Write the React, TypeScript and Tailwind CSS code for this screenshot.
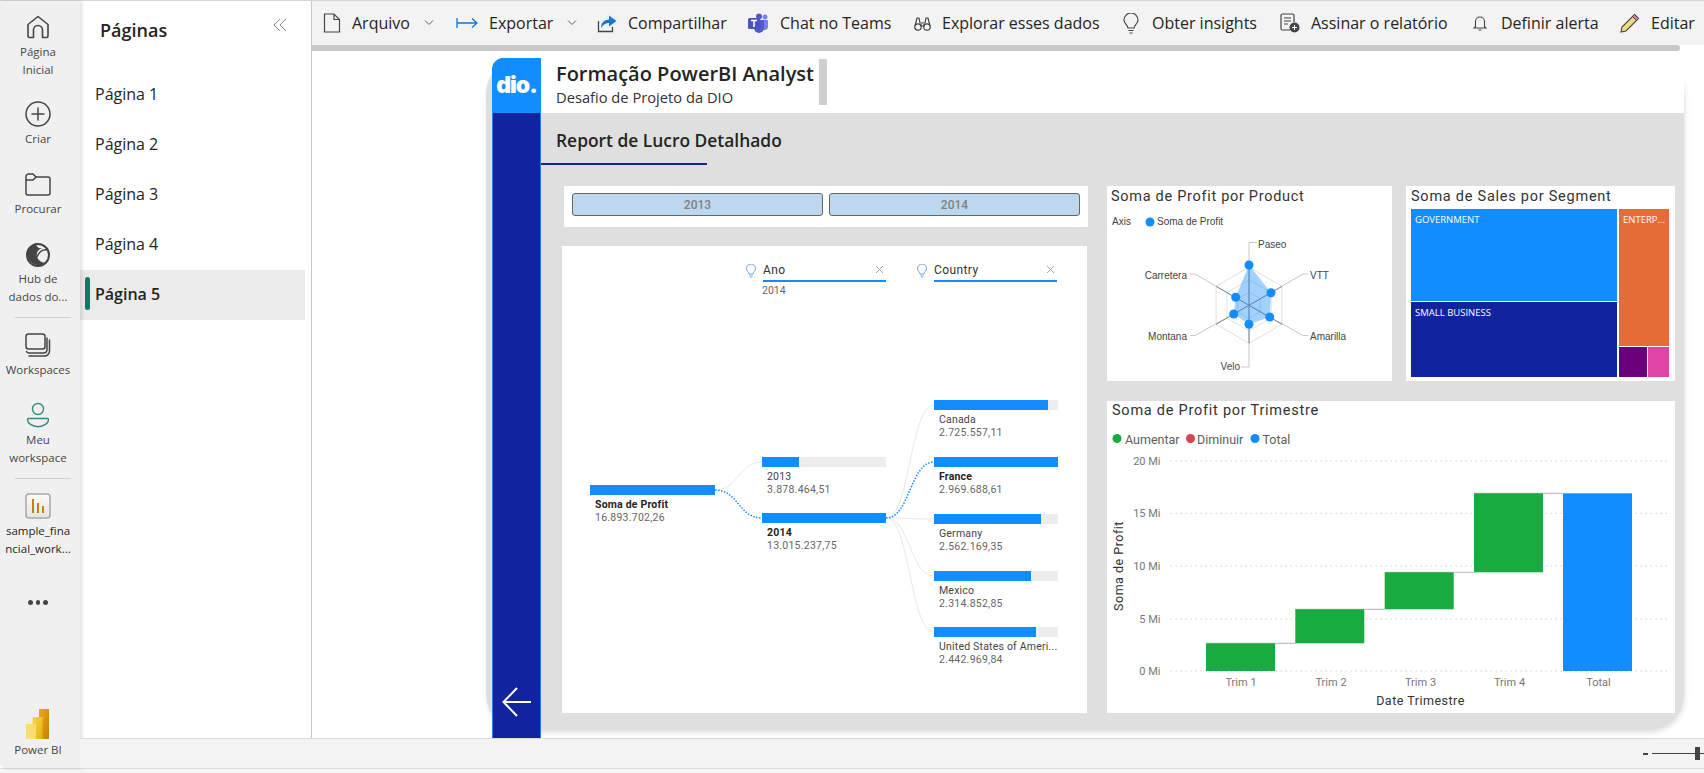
import React from "react";

const sans = "[font-family:'Open_Sans',sans-serif]";
const din = "[font-family:'Roboto',sans-serif]";

const S = { fill: "none", stroke: "#444", strokeWidth: 1.5, strokeLinejoin: "round" as const, strokeLinecap: "round" as const };

function HomeIcon() {
  return (
    <svg width="26" height="26" viewBox="0 0 26 26">
      <path d="M3 22V10.500L13 2.500l10 8V22a1.500 1.500 0 0 1-1.500 1.500H17.500V16a4.500 4.500 0 0 0-9 0v7.500H4.500A1.500 1.500 0 0 1 3 22z" {...S} strokeWidth={1.6} />
    </svg>
  );
}
function PlusIcon() {
  return (
    <svg width="26" height="26" viewBox="0 0 26 26">
      <circle cx="13" cy="13" r="12" {...S} />
      <path d="M13 7v12M7 13h12" {...S} />
    </svg>
  );
}
function FolderIcon() {
  return (
    <svg width="26" height="26" viewBox="0 0 26 26">
      <path d="M1 5.500A2.500 2.500 0 0 1 3.500 3H8l3 3h12a2 2 0 0 1 2 2v14a2 2 0 0 1-2 2H3a2 2 0 0 1-2-2z" {...S} />
      <path d="M1 9h7l3-3" {...S} />
    </svg>
  );
}
function HubIcon() {
  return (
    <svg width="26" height="26" viewBox="0 0 26 26">
      <circle cx="13" cy="14" r="11" fill="#f0f0f0" stroke="#444" strokeWidth="2" />
      <path d="M2.500 13C3 7 8 3 11 2c0 4 3 6 7 5-5 1-7 5-6 9 1 3 5 6 9 6-3 2-6 3-9 2-6-1-10-6-9.500-11z" fill="#444" />
      <path d="M12 16c2-5 6-8 11-7" fill="none" stroke="#444" strokeWidth="1.500" />
    </svg>
  );
}
function WorkspacesIcon() {
  return (
    <svg width="26" height="26" viewBox="0 0 26 26">
      <rect x="1" y="2" width="19" height="15" rx="2.500" {...S} />
      <path d="M1.500 19.500c.5 1 1.500 1.500 2.500 1.500h14.500c2 0 3.500-1.500 3.500-3.500V6" {...S} />
      <path d="M4 24h15.500c2.500 0 5-2 5-5V8" {...S} />
    </svg>
  );
}
function PersonIcon() {
  return (
    <svg width="26" height="26" viewBox="0 0 26 26">
      <circle cx="13" cy="7" r="5.500" fill="none" stroke="#2f8f7f" strokeWidth="1.400" />
      <path d="M3.500 16.500h19c.8 0 1 .6 1 1.200 0 3.300-4.500 7-10.500 7S2.500 21 2.500 17.700c0-.6.2-1.200 1-1.200z" fill="none" stroke="#2f8f7f" strokeWidth="1.400" />
    </svg>
  );
}
function ReportIcon() {
  return (
    <svg width="26" height="26" viewBox="0 0 26 26">
      <defs>
        <linearGradient id="rb" x1="0" x2="0" y1="0" y2="1"><stop offset="0" stopColor="#fbfbfb" /><stop offset="1" stopColor="#e4e4e4" /></linearGradient>
      </defs>
      <rect x="1" y="1" width="24" height="24" rx="3" fill="url(#rb)" stroke="#a8a8a8" strokeWidth="1.500" />
      <rect x="7" y="6" width="2" height="14" fill="#c57f13" />
      <rect x="12" y="10" width="2" height="10" fill="#c57f13" />
      <rect x="17" y="13" width="2" height="7" fill="#c57f13" />
    </svg>
  );
}
function PbiLogo() {
  return (
    <svg width="24" height="30" viewBox="0 0 24 30">
      <defs>
        <linearGradient id="pa" x1="0" x2="1" y1="0" y2="1"><stop offset="0" stopColor="#e6ad10" /><stop offset="1" stopColor="#c87d0e" /></linearGradient>
        <linearGradient id="pb" x1="0" x2="1" y1="0" y2="1"><stop offset="0" stopColor="#f6d751" /><stop offset="1" stopColor="#e6ad10" /></linearGradient>
      </defs>
      <rect x="13" y="0" width="10" height="30" fill="url(#pa)" />
      <rect x="6.500" y="8" width="10" height="22" fill="url(#pb)" />
      <rect x="0" y="15" width="10" height="15" fill="#f8de6f" />
    </svg>
  );
}

function RailItem({ icon, lines, mt, dark }: { icon: React.ReactNode; lines: string[]; mt: string; dark?: boolean }) {
  return (
    <div className={`flex flex-col items-center ${mt}`}>
      <div className="h-[26px] flex items-center justify-center">{icon}</div>
      <div className={`mt-[3px] text-center text-[11.5px] leading-[18px] whitespace-nowrap ${dark ? "text-[#252423]" : "text-[#484644]"}`}>
        {lines.map((l) => <div key={l}>{l}</div>)}
      </div>
    </div>
  );
}

function Rail() {
  return (
    <div className="w-[80px] shrink-0 h-full pr-[4px] bg-[#f0f0f0] rounded-bl-[6px] shadow-[2px_0_4px_rgba(0,0,0,0.12)] z-20 flex flex-col relative">
      <RailItem mt="mt-[13px]" icon={<HomeIcon />} lines={["Página", "Inicial"]} />
      <RailItem mt="mt-[22px]" icon={<PlusIcon />} lines={["Criar"]} />
      <RailItem mt="mt-[23px]" icon={<FolderIcon />} lines={["Procurar"]} />
      <RailItem mt="mt-[23px]" icon={<HubIcon />} lines={["Hub de", "dados do..."]} />
      <div className="mt-[11px] ml-[15px] mr-[5px] h-px bg-[#d0d0d0]" />
      <RailItem mt="mt-[14px]" icon={<WorkspacesIcon />} lines={["Workspaces"]} />
      <RailItem mt="mt-[23px]" icon={<PersonIcon />} lines={["Meu", "workspace"]} />
      <div className="mt-[11px] ml-[15px] mr-[5px] h-px bg-[#d0d0d0]" />
      <RailItem mt="mt-[14px]" icon={<ReportIcon />} lines={["sample_fina", "ncial_work..."]} dark />
      <div className="mt-[42px] flex justify-center gap-[3px]">
        <span className="w-[4.5px] h-[4.5px] rounded-full bg-[#484644]" />
        <span className="w-[4.5px] h-[4.5px] rounded-full bg-[#484644]" />
        <span className="w-[4.5px] h-[4.5px] rounded-full bg-[#484644]" />
      </div>
      <div className="mt-auto mb-[9px] flex flex-col items-center">
        <PbiLogo />
        <div className="mt-[2px] text-[11.5px] leading-[18px] text-[#484644]">Power BI</div>
      </div>
    </div>
  );
}

function PagesPanel() {
  const pages = ["Página 1", "Página 2", "Página 3", "Página 4", "Página 5"];
  return (
    <div className="w-[232px] shrink-0 bg-white border-r border-[#c8c8c8] flex flex-col">
      <div className="h-[69px] flex items-start justify-between pl-[20px] pr-[24px] pt-[15px]">
        <span className="text-[18px] leading-[28px] font-semibold text-[#252423]">Páginas</span>
        <svg className="mt-[2px]" width="14" height="14" viewBox="0 0 14 14" fill="none" stroke="#7f8c99" strokeWidth="1">
          <path d="M7 1L1 7l6 6M13 1L7 7l6 6" />
        </svg>
      </div>
      {pages.map((p, i) => (
        <div key={p} className={`h-[50px] w-[225px] flex items-center pl-[15px] pb-[3px] text-[16px] text-[#252423] relative ${i === 4 ? "bg-[#ebebeb] font-semibold" : ""}`}>
          {i === 4 && <span className="absolute left-[5px] top-[7px] w-[5px] h-[33px] rounded-[3px] bg-[#117865]" />}
          {p}
        </div>
      ))}
    </div>
  );
}

function Chevron() {
  return (
    <svg className="ml-[14px]" width="10" height="6" viewBox="0 0 10 6" fill="none" stroke="#605e5c" strokeWidth="1"><path d="M1 .5l4 4 4-4" /></svg>
  );
}

function Tool({ w, icon, label, chevron }: { w: string; icon: React.ReactNode; label: string; chevron?: boolean }) {
  return (
    <div className={`${w} shrink-0 flex items-center h-full`}>
      {icon}
      <span className="ml-[11px] text-[16px] text-[#252423] whitespace-nowrap">{label}</span>
      {chevron && <Chevron />}
    </div>
  );
}

function Toolbar() {
  return (
    <div className="h-[44px] bg-[#f3f3f3] flex items-center pl-[11px] overflow-hidden">
      <Tool w="w-[133px]" label="Arquivo" chevron icon={
        <svg width="18" height="20" viewBox="0 0 18 20" fill="none" stroke="#444" strokeWidth="1.200"><path d="M1.500 1h9.500l5.500 5.500V19h-15z" /><path d="M11 1v5.500h5.500" /></svg>} />
      <Tool w="w-[141px]" label="Exportar" chevron icon={
        <svg width="22" height="12" viewBox="0 0 22 12" fill="none" stroke="#0f78d4" strokeWidth="1.300"><path d="M1 1v10M1 6h20M16 1.500L21 6l-5 4.500" /></svg>} />
      <Tool w="w-[151px]" label="Compartilhar" icon={
        <svg width="20" height="20" viewBox="0 0 20 20"><path d="M1.500 8v10.500h14V14" fill="none" stroke="#444" strokeWidth="1.300" /><path d="M4 15c0-5 3-8.500 8-8.500V2.500L19.500 8 12 13.500V10c-3 0-6 1.500-8 5z" fill="#1c78c8" /></svg>} />
      <Tool w="w-[166px]" label="Chat no Teams" icon={
        <svg width="21" height="20" viewBox="0 0 21 20"><circle cx="17" cy="4" r="2.500" fill="#7b83eb" /><circle cx="11" cy="3.500" r="3" fill="#5059c9" /><path d="M13 7h7v6.500a3.500 3.500 0 0 1-7 0z" fill="#7b83eb" /><path d="M6 7h10v8a5 5 0 0 1-10 0z" fill="#5059c9" /><rect x="0" y="5" width="12" height="11" rx="1.500" fill="#4b53bc" /><path d="M3 7.500h6M6 7.500V14" stroke="#fff" strokeWidth="1.600" /></svg>} />
      <Tool w="w-[209px]" label="Explorar esses dados" icon={
        <svg width="17" height="17" viewBox="0 0 17 17" fill="none" stroke="#444" strokeWidth="1.200"><circle cx="4" cy="12" r="3.200" /><circle cx="13" cy="12" r="3.200" /><path d="M1 11l2-8h2l1 5h5l1-5h2l2 8M7 9v2h3V9" /></svg>} />
      <Tool w="w-[157px]" label="Obter insights" icon={
        <svg className="mr-[2px]" width="16" height="21" viewBox="0 0 16 21" fill="none" stroke="#444" strokeWidth="1.200"><path d="M5 15c0-3-4-4-4-8a7 7 0 0 1 14 0c0 4-4 5-4 8z" /><path d="M5.500 17.500h5M6.500 20h3" /></svg>} />
      <Tool w="w-[193px]" label="Assinar o relatório" icon={
        <svg width="20" height="20" viewBox="0 0 20 20"><path d="M10 17H2.500A1.500 1.500 0 0 1 1 15.500v-13A1.500 1.500 0 0 1 2.500 1h10A1.500 1.500 0 0 1 14 2.500V9" fill="none" stroke="#444" strokeWidth="1.200" /><path d="M4 5h7M4 8h7M4 11h4" stroke="#444" strokeWidth="1.200" /><circle cx="14.500" cy="14.500" r="5" fill="#444" /><path d="M14.500 12v5M12 14.500h5" stroke="#fff" strokeWidth="1" /></svg>} />
      <Tool w="w-[147px]" label="Definir alerta" icon={
        <svg className="mr-[3px]" width="14" height="16" viewBox="0 0 14 16" fill="none" stroke="#444" strokeWidth="1.100"><path d="M2.500 11.500V6.500a4.500 4.500 0 0 1 9 0v5l1.500 1.500H1zM5.500 15h3" /></svg>} />
      <Tool w="w-[84px]" label="Editar" icon={
        <svg width="20" height="20" viewBox="0 0 20 20"><path d="M14.500 1.500l4 4L6 18l-5 1 1-5z" fill="#f3d980" stroke="#444" strokeWidth="1.100" /><path d="M14.500 1.500l4 4-2 2-4-4z" fill="#d17fb0" stroke="#444" strokeWidth="1" /></svg>} />
    </div>
  );
}

function Node({ x, y, w, fill, label, value, bold }: { x: number; y: number; w: number; fill: number; label: string; value: string; bold?: boolean }) {
  return (
    <div className="absolute" style={{ left: x - 562, top: y - 246, width: w }}>
      <div className="h-[10px] bg-[#ededed]">
        <div className="h-full bg-[#118dff]" style={{ width: fill }} />
      </div>
      <div className={`pl-[5px] mt-[3px] text-[10.5px] leading-[13px] whitespace-nowrap overflow-hidden ${din} ${bold ? "font-bold text-[#252423]" : "text-[#444]"} tracking-[0.2px]`}>{label}</div>
      <div className={`pl-[5px] text-[10.5px] leading-[14px] text-[#666] ${din} tracking-[0.25px]`}>{value}</div>
    </div>
  );
}

function HeaderFilter({ x, label }: { x: number; label: string }) {
  return (
    <div className="absolute flex items-end" style={{ left: x - 562, top: 17, width: 140 }}>
      <svg className="mb-[4px]" width="10" height="14" viewBox="0 0 10 14" fill="none" stroke="#6f9cf0" strokeWidth="1"><path d="M3 10c0-2-2.500-3-2.500-5.500a4.500 4.500 0 0 1 9 0C9.500 7 7 8 7 10zM3.500 12h3M4.500 13.500h1" /></svg>
      <div className="ml-[7px] flex-1 border-b-2 border-[#118dff] h-[19px] pb-[4px] flex items-center justify-between pr-[2px]">
        <span className={`text-[12px] text-[#333] tracking-[0.4px] ${din}`}>{label}</span>
        <svg width="9" height="9" viewBox="0 0 9 9" stroke="#a6a6a6" strokeWidth="1"><path d="M1 1l7 7M8 1L1 8" /></svg>
      </div>
    </div>
  );
}

function TreeCard() {
  const curve = (x1: number, y1: number, x2: number, y2: number) => {
    const m = (x1 + x2) / 2;
    return `M${x1} ${y1}C${m} ${y1} ${m} ${y2} ${x2} ${y2}`;
  };
  return (
    <div className="relative h-[467px] w-[525px] bg-white">
      <svg className="absolute left-0 top-0" width="525" height="467" viewBox="562 246 525 467" fill="none">
        <path d={curve(715, 490, 762, 462)} stroke="#e8e8e8" />
        {[405, 519, 576, 632].map((y) => <path key={y} d={curve(886, 518, 934, y)} stroke="#e8e8e8" />)}
        <path d={curve(715, 490, 762, 518)} stroke="#118dff" strokeWidth="1.500" strokeDasharray="1.500 1.500" />
        <path d={curve(886, 518, 934, 462)} stroke="#118dff" strokeWidth="1.500" strokeDasharray="1.500 1.500" />
      </svg>
      <HeaderFilter x={746} label="Ano" />
      <div className={`absolute left-[200px] top-[38px] text-[10.5px] leading-[14px] text-[#666] ${din}`}>2014</div>
      <HeaderFilter x={917} label="Country" />
      <Node x={590} y={485} w={125} fill={125} label="Soma de Profit" value="16.893.702,26" bold />
      <Node x={762} y={457} w={124} fill={37} label="2013" value="3.878.464,51" />
      <Node x={762} y={513} w={124} fill={124} label="2014" value="13.015.237,75" bold />
      <Node x={934} y={400} w={124} fill={114} label="Canada" value="2.725.557,11" />
      <Node x={934} y={457} w={124} fill={124} label="France" value="2.969.688,61" bold />
      <Node x={934} y={514} w={124} fill={107} label="Germany" value="2.562.169,35" />
      <Node x={934} y={571} w={124} fill={97} label="Mexico" value="2.314.852,85" />
      <Node x={934} y={627} w={124} fill={102} label="United States of Ameri..." value="2.442.969,84" />
    </div>
  );
}

function RadarCard() {
  const cx = 1249, cy = 305.3;
  const dirs = [[0, -1], [0.866, -0.5], [0.866, 0.5], [0, 1], [-0.866, 0.5], [-0.866, -0.5]];
  const hex = (r: number) => dirs.map(([a, b]) => `${cx + a * r},${cy + b * r}`).join(" ");
  const pts = [[1249, 265], [1271, 292.7], [1269.7, 317], [1249, 324.3], [1233.7, 314], [1235.7, 297.3]];
  return (
    <div className="w-[285px] h-[195px] bg-white">
      <div className={`h-[22px] pl-[4px] text-[14.5px] leading-[21px] text-[#333] tracking-[0.7px] whitespace-nowrap ${din}`}>Soma de Profit por Product</div>
      <svg width="285" height="173" viewBox="1107 208 285 173" fontFamily="'Liberation Sans',sans-serif" fontSize="10" fill="#444">
        <text x="1112" y="225">Axis</text>
        <circle cx="1150" cy="222" r="4.500" fill="#118dff" />
        <text x="1157" y="225">Soma de Profit</text>
        {[38, 25.5, 13].map((r) => <polygon key={r} points={hex(r)} fill="none" stroke="#e0e0e0" />)}
        <path d="M1249 305.300V242.500H1257M1249 305.300L1303 274H1308M1249 305.300L1303 335.500H1308M1249 305.300V367H1241M1249 305.300L1195 335.500H1190M1249 305.300L1195 274H1190" fill="none" stroke="#c8c8c8" />
        <path d="M1249 267.300V343.300M1216 286.300L1282 324.300M1216 324.300L1282 286.300" stroke="#8a8a8a" />
        <polygon points={pts.map((p) => p.join(",")).join(" ")} fill="#118dff" fillOpacity="0.4" />
        {pts.map(([x, y]) => <circle key={x} cx={x} cy={y} r="4.500" fill="#118dff" />)}
        <text x="1258" y="248">Paseo</text>
        <text x="1310" y="279">VTT</text>
        <text x="1310" y="340">Amarilla</text>
        <text x="1240" y="370" textAnchor="end">Velo</text>
        <text x="1187" y="340" textAnchor="end">Montana</text>
        <text x="1187" y="279" textAnchor="end">Carretera</text>
      </svg>
    </div>
  );
}

function TreemapCard() {
  return (
    <div className="w-[269px] h-[195px] bg-white flex flex-col">
      <div className={`h-[23px] pl-[5px] text-[14.5px] leading-[21px] text-[#333] tracking-[0.75px] whitespace-nowrap ${din}`}>Soma de Sales por Segment</div>
      <div className={`ml-[5px] w-[258px] h-[168px] flex gap-[2px] text-[9.5px] leading-[13px] text-white ${sans}`}>
        <div className="w-[206px] flex flex-col gap-[1px]">
          <div className="h-[92px] bg-[#118dff] pl-[4px] pt-[4px]">GOVERNMENT</div>
          <div className="flex-1 bg-[#12239e] pl-[4px] pt-[4px]">SMALL BUSINESS</div>
        </div>
        <div className="flex-1 flex flex-col gap-[1px]">
          <div className="h-[137px] bg-[#e66c37] pl-[4px] pt-[4px]">ENTERP...</div>
          <div className="flex-1 flex gap-[1px]">
            <div className="w-[28px] bg-[#6b007b]" />
            <div className="flex-1 bg-[#e044a7]" />
          </div>
        </div>
      </div>
    </div>
  );
}

function WaterfallCard() {
  const bars = [
    { x: 1206, top: 643.3, bottom: 671, c: "#1aab40", n: "Trim 1", cx: 1241 },
    { x: 1295.3, top: 609.3, bottom: 643.3, c: "#1aab40", n: "Trim 2", cx: 1331 },
    { x: 1384.7, top: 572.3, bottom: 609.3, c: "#1aab40", n: "Trim 3", cx: 1420.5 },
    { x: 1474, top: 493.3, bottom: 572.3, c: "#1aab40", n: "Trim 4", cx: 1509.5 },
    { x: 1563, top: 493.3, bottom: 671, c: "#118dff", n: "Total", cx: 1598.5 },
  ];
  const grid: [string, number][] = [["20 Mi", 461], ["15 Mi", 513.3], ["10 Mi", 566], ["5 Mi", 619], ["0 Mi", 671]];
  return (
    <div className="w-[568px] h-[312px] bg-white">
      <div className={`h-[24px] pl-[5px] text-[14.5px] leading-[20px] text-[#333] tracking-[0.75px] whitespace-nowrap ${din}`}>Soma de Profit por Trimestre</div>
      <svg width="568" height="288" viewBox="1107 425 568 288" fontFamily="'Roboto',sans-serif">
        <circle cx="1117" cy="438.500" r="4.500" fill="#1aab40" />
        <text x="1125" y="443.500" fontSize="12.500" fill="#605e5c">Aumentar</text>
        <circle cx="1190.500" cy="438.500" r="4.500" fill="#d64554" />
        <text x="1197" y="443.500" fontSize="12.500" fill="#605e5c">Diminuir</text>
        <circle cx="1255" cy="438.500" r="4.500" fill="#118dff" />
        <text x="1262.500" y="443.500" fontSize="12.500" fill="#605e5c">Total</text>
        {grid.map(([t, y]) => (
          <g key={t}>
            <line x1="1170.500" x2="1667.500" y1={y} y2={y} stroke="#d2d2d2" strokeDasharray="1.500 3.500" />
            <text x="1160.500" y={y + 4} textAnchor="end" fontSize="11" fill="#777">{t}</text>
          </g>
        ))}
        {bars.slice(0, 4).map((b, i) => (
          <line key={b.n} x1={b.x} x2={bars[i + 1].x} y1={b.top} y2={b.top} stroke="#b3b3b3" strokeWidth="1" />
        ))}
        {bars.map((b) => (
          <g key={b.n}>
            <rect x={b.x} y={b.top} width="69" height={b.bottom - b.top} fill={b.c} />
            <text x={b.cx} y="686" textAnchor="middle" fontSize="11" fill="#777">{b.n}</text>
          </g>
        ))}
        <text x="1420.500" y="705" textAnchor="middle" fontSize="12.500" fill="#333" letterSpacing="0.500">Date Trimestre</text>
        <text transform="translate(1123 566) rotate(-90)" textAnchor="middle" fontSize="12.500" fill="#333" letterSpacing="0.500">Soma de Profit</text>
      </svg>
    </div>
  );
}

function Slicer() {
  const btn = `flex-1 h-[23px] bg-[#bdd7ee] border border-[#666] rounded-[3px] flex items-center justify-center text-[12px] font-medium text-[#808080] ${din}`;
  return (
    <div className="ml-[2px] h-[41px] w-[524px] bg-white flex items-start gap-[6px] px-[8px] pt-[7px]">
      <div className={btn}>2013</div>
      <div className={btn}>2014</div>
    </div>
  );
}

function Canvas() {
  return (
    <div className="ml-[174px] mt-[7px] w-[1198px] h-[672px] rounded-[36px] bg-[#dfdfdf] shadow-[1px_3px_5px_rgba(0,0,0,0.12)] flex overflow-visible">
      <div className="ml-[6px] w-[49px] h-[680px] shrink-0 bg-[#12239e] border-x border-[#2f7fd8] rounded-tl-[12px] flex flex-col z-10">
        <div className="h-[55px] -mx-px bg-[#118dff] rounded-tl-[12px] flex items-center justify-center">
          <span className="[font-family:'Inter',sans-serif] text-[23px] font-black text-white tracking-[-1px] leading-none">dio.</span>
        </div>
        <div className="mt-auto mb-[21px] flex justify-center">
          <svg width="30" height="30" viewBox="0 0 30 30" fill="none" stroke="#fff" strokeWidth="2"><path d="M29 15H2M15 1L1.500 15 15 29" /></svg>
        </div>
      </div>
      <div className="flex-1 min-w-0 flex flex-col">
        <div className="h-[55px] bg-white flex">
          <div className="ml-[15px] w-[263px] pt-[3px]">
            <div className="text-[20px] leading-[26px] font-semibold text-[#252423] whitespace-nowrap">Formação PowerBI Analyst</div>
            <div className="text-[14.7px] leading-[21px] text-[#333] whitespace-nowrap">Desafio de Projeto da DIO</div>
          </div>
          <div className="w-[8px] h-[46px] mt-[1px] bg-[#cfcfcf]" />
        </div>
        <div className="h-[50px] pl-[15px] w-[151px] border-b-2 border-[#12239e] box-content">
          <div className="pt-[14px] text-[17.4px] leading-[26px] font-semibold text-[#252423] whitespace-nowrap">Report de Lucro Detalhado</div>
        </div>
        <div className="mt-[21px] ml-[21px] flex gap-[19px]">
          <div className="w-[526px] flex flex-col gap-[19px]">
            <Slicer />
            <TreeCard />
          </div>
          <div className="w-[568px] flex flex-col gap-[20px]">
            <div className="flex gap-[14px]">
              <RadarCard />
              <TreemapCard />
            </div>
            <WaterfallCard />
          </div>
        </div>
      </div>
    </div>
  );
}

export default function App() {
  return (
    <div className={`h-[773px] w-[1704px] overflow-hidden bg-[#f5f5f5] flex flex-col ${sans}`}>
      <div className="h-px bg-[#d8d8d8] shrink-0" />
      <div className="h-[767px] flex bg-white border-b border-[#dcdcdc] box-content">
        <Rail />
        <div className="flex-1 min-w-0 flex flex-col">
          <div className="flex-1 min-h-0 flex">
            <PagesPanel />
            <div className="flex-1 min-w-0 flex flex-col">
              <Toolbar />
              <div className="h-[6px] mr-[24px] bg-[#c8c8c8] rounded-r-[3px] shrink-0" />
              <Canvas />
            </div>
          </div>
          <div className="h-[30px] shrink-0 bg-[#f3f3f3] border-t border-[#dcdcdc] flex items-center justify-end z-20 relative">
            <span className="w-[5px] h-[2px] bg-[#444] mr-[4px]" />
            <span className="w-[52px] h-px bg-[#444] relative">
              <span className="absolute left-[43px] top-[-6px] w-[5px] h-[13px] bg-[#444]" />
            </span>
          </div>
        </div>
      </div>
    </div>
  );
}
